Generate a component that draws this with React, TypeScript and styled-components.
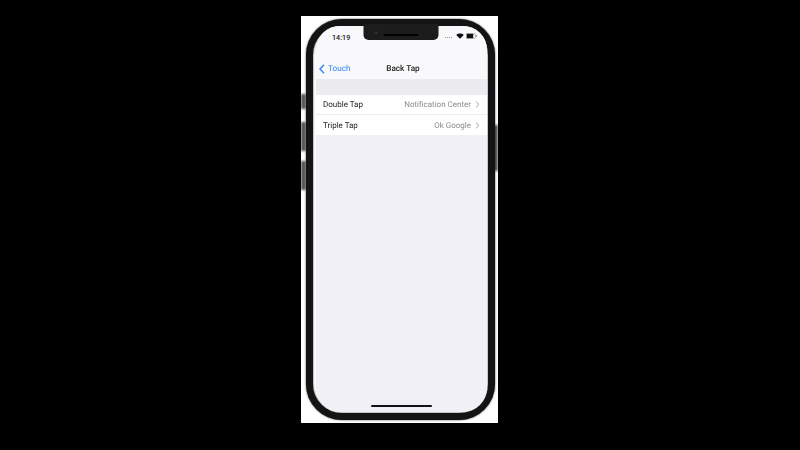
import styled, { createGlobalStyle } from 'styled-components';

const GlobalStyle = createGlobalStyle`
	html, body {
		margin: 0;
		background: #000;
	}
	body {
		font-family: Roboto, 'Liberation Sans', sans-serif;
		text-rendering: geometricPrecision;
	}
`;

const Page = styled.div`
	width: 800px;
	height: 450px;
	box-sizing: border-box;
	overflow: hidden;
	background: #000;
	padding: 16px 0 0 301px;
`;

const Sheet = styled.div`
	position: relative;
	width: 197px;
	height: 407px;
	box-sizing: border-box;
	overflow: hidden;
	background: #fff;
	padding: 3px 3px 3px 5px;
`;

const SideButton = styled.span<{ $side: 'left' | 'right'; $top: number; $height: number }>`
	position: absolute;
	${(p) => p.$side}: 0;
	top: ${(p) => p.$top}px;
	width: 5px;
	height: ${(p) => p.$height}px;
	background: #555;
	filter: blur(1px);
`;

const Phone = styled.div`
	position: relative;
	height: 100%;
	box-sizing: border-box;
	border: 7px solid #141414;
	border-radius: 36px;
	background: #fff;
	padding: 0 1px 1px 3px;
	display: flex;
	box-shadow: 0 0 2px #2a2a2a, inset 0 0 2px #2a2a2a;
	filter: blur(0.5px);
`;

const Screen = styled.div`
	flex: 1;
	border-radius: 24px;
	overflow: hidden;
	background: #f1f0f6;
	display: flex;
	flex-direction: column;
`;

const Notch = styled.div`
	position: absolute;
	top: -2px;
	left: 50%;
	transform: translateX(-50%);
	width: 75px;
	height: 16px;
	box-sizing: border-box;
	padding-top: 5px;
	background: #1c1c1c;
	border-radius: 0 0 5px 5px;
	display: flex;
	justify-content: center;
	align-items: center;
`;

const Camera = styled.span`
	position: absolute;
	left: 11px;
	top: 7px;
	width: 3px;
	height: 3px;
	border-radius: 50%;
	background: #303030;
`;

const Speaker = styled.span`
	width: 35px;
	height: 2px;
	border-radius: 1px;
	background: #000;
`;

const Header = styled.header`
	height: 53px;
	flex: none;
	background: #f9f9fb;
	display: flex;
	flex-direction: column;
`;

const StatusBar = styled.div`
	height: 22px;
	flex: none;
	box-sizing: border-box;
	padding: 0 10px 0 16px;
	display: flex;
	justify-content: space-between;
	align-items: center;
`;

const Time = styled.span`
	font-size: 7.2px;
	font-weight: 500;
	color: #222;
`;

const StatusIcons = styled.div`
	display: flex;
	align-items: center;
	gap: 2px;
	margin-top: -3px;
`;

const Dots = styled.span`
	width: 8px;
	height: 1px;
	margin-right: 1px;
	background: repeating-linear-gradient(90deg, #999 0 1px, transparent 1px 2px);
	align-self: flex-end;
	margin-bottom: 1px;
`;

const NavBar = styled.nav`
	flex: 1;
	display: grid;
	grid-template-columns: 1fr auto 1fr;
	align-items: center;
	padding: 11px 0 0 3px;
`;

const BackLink = styled.span`
	display: flex;
	align-items: center;
	gap: 3px;
	font-size: 8.2px;
	color: #2b84f6;
`;

const Title = styled.span`
	font-size: 8.2px;
	font-weight: 500;
	color: #222;
`;

const Spacer = styled.div`
	height: 16px;
	flex: none;
	background: #ebebf0;
`;

const List = styled.div`
	background: #fff;
	display: flex;
	flex-direction: column;
	flex: none;
`;

const Row = styled.div<{ $last?: boolean }>`
	height: 20px;
	box-sizing: border-box;
	padding: 0 7px;
	display: flex;
	align-items: center;
	justify-content: space-between;
	border-bottom: ${(p) => (p.$last ? 'none' : '1px solid #ececf0')};
`;

const RowLabel = styled.span`
	font-size: 8px;
	color: #222;
`;

const RowValue = styled.span`
	display: flex;
	align-items: center;
	gap: 4px;
	font-size: 8px;
	color: #8c8c90;
`;

const HomeBar = styled.span`
	position: absolute;
	bottom: 6px;
	left: 58px;
	width: 61px;
	height: 2px;
	border-radius: 1px;
	background: #111;
`;

const Chevron = () => (
	<svg width="5" height="7" viewBox="0 0 5 7" fill="none">
		<path d="M1 0.7 L4 3.5 L1 6.3" stroke="#a8a8ac" strokeWidth="1" />
	</svg>
);

export default function App() {
	return (
		<>
			<GlobalStyle />
			<Page>
				<Sheet>
					<SideButton $side="left" $top={78} $height={15} />
					<SideButton $side="left" $top={106} $height={29} />
					<SideButton $side="left" $top={145} $height={29} />
					<SideButton $side="right" $top={109} $height={46} />
					<Phone>
						<Screen>
							<Header>
								<StatusBar>
									<Time>14:19</Time>
									<StatusIcons>
										<Dots />
										<svg width="8" height="6" viewBox="0 0 16 12">
											<path d="M8 11.5 L0.5 3.8 C4.5 0 11.5 0 15.5 3.8 Z" fill="#111" />
										</svg>
										<svg width="11" height="6" viewBox="0 0 22 12">
											<rect x="0.5" y="0.5" width="18" height="11" rx="2.5" fill="#fff" stroke="#777" />
											<rect x="1.5" y="1.5" width="13" height="9" rx="1" fill="#111" />
											<rect x="19.5" y="4" width="2" height="4" fill="#888" />
										</svg>
									</StatusIcons>
								</StatusBar>
								<NavBar>
									<BackLink>
										<svg width="6" height="10" viewBox="0 0 6 10" fill="none">
											<path d="M5 0.8 L1 5 L5 9.2" stroke="#2b84f6" strokeWidth="1.4" />
										</svg>
										Touch
									</BackLink>
									<Title>Back Tap</Title>
								</NavBar>
							</Header>
							<Spacer />
							<List>
								<Row>
									<RowLabel>Double Tap</RowLabel>
									<RowValue>
										Notification Center
										<Chevron />
									</RowValue>
								</Row>
								<Row $last>
									<RowLabel>Triple Tap</RowLabel>
									<RowValue>
										Ok Google
										<Chevron />
									</RowValue>
								</Row>
							</List>
						</Screen>
						<Notch>
							<Camera />
							<Speaker />
						</Notch>
						<HomeBar />
					</Phone>
				</Sheet>
			</Page>
		</>
	);
}
